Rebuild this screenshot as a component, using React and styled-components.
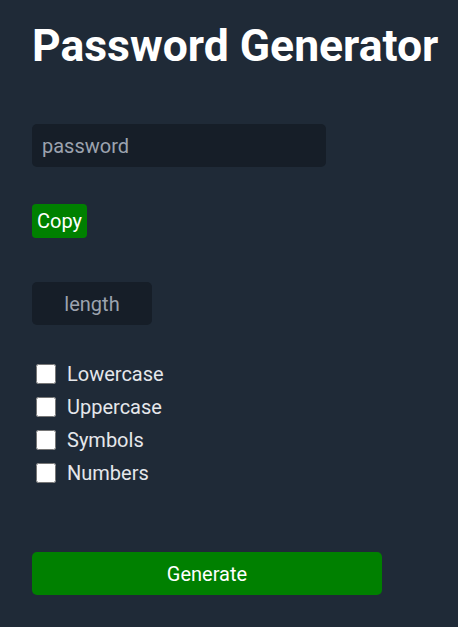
import { useState } from "react"
import styled, { createGlobalStyle } from "styled-components"

const Global = createGlobalStyle`
html, body {
  margin: 0;
  background-color: #1f2a37;
  font-family: Roboto, "Noto Sans", sans-serif;
  color: #e5e7eb;
}
`

export default function App() {
  const [password, setPassword] = useState("")
  const [length, setLength] = useState("")
  const [options, setOptions] = useState({ lower: false, upper: false, symbols: false, numbers: false })

  function toggle(key) {
    setOptions({ ...options, [key]: !options[key] })
  }

  return (<>
    <Global />
    <Page>
      <Title>Password Generator</Title>
      <Field placeholder="password" value={password} onChange={(e) => setPassword(e.target.value)} />
      <Copy>Copy</Copy>
      <Length placeholder="length" value={length} onChange={(e) => setLength(e.target.value)} />
      <Options>
        <Option><Box type="checkbox" checked={options.lower} onChange={() => toggle("lower")} />Lowercase</Option>
        <Option><Box type="checkbox" checked={options.upper} onChange={() => toggle("upper")} />Uppercase</Option>
        <Option><Box type="checkbox" checked={options.symbols} onChange={() => toggle("symbols")} />Symbols</Option>
        <Option><Box type="checkbox" checked={options.numbers} onChange={() => toggle("numbers")} />Numbers</Option>
      </Options>
      <Generate>Generate</Generate>
    </Page>
  </>)
}

const Page = styled.div`
display: flex;
flex-direction: column;
align-items: flex-start;
padding: 18px 32px;
min-height: 591px;
`

const Title = styled.h1`
margin: 0;
font-size: 44.5px;
font-weight: 700;
color: white;
line-height: 56px;
white-space: nowrap;
`

const Field = styled.input`
margin-top: 50px;
width: 294px;
height: 43px;
box-sizing: border-box;
border: none;
border-radius: 5px;
background-color: #161e28;
padding: 0 10px;
font-family: Roboto, sans-serif;
font-size: 20px;
color: #e5e7eb;
outline: none;
&::placeholder { color: #9ca3af; }
`

const Copy = styled.button`
margin-top: 37px;
height: 34px;
padding: 0 5px;
border: none;
border-radius: 4px;
background-color: #008000;
color: white;
font-family: Roboto, sans-serif;
font-size: 20px;
`

const Length = styled(Field)`
margin-top: 44px;
width: 120px;
text-align: center;
`

const Options = styled.div`
margin-top: 32px;
display: flex;
flex-direction: column;
`

const Option = styled.label`
display: flex;
align-items: center;
height: 33px;
font-size: 20px;
color: #e5e7eb;
`

const Box = styled.input`
width: 20px;
height: 20px;
margin: 0 11px 0 4px;
`

const Generate = styled.button`
margin-top: 63px;
width: 350px;
height: 43px;
border: none;
border-radius: 5px;
background-color: #008000;
color: white;
font-family: Roboto, sans-serif;
font-size: 20px;
`
